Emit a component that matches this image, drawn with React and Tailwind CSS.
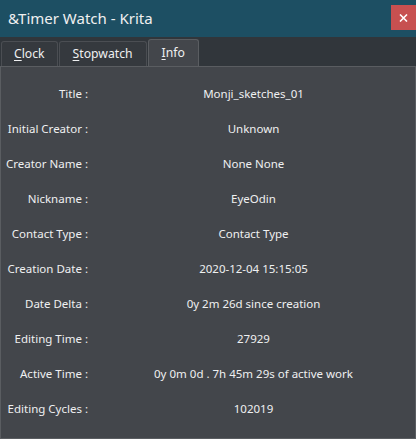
import React from 'react'

const rows = [
  ['Title :', 'Monji_sketches_01'],
  ['Initial Creator :', 'Unknown'],
  ['Creator Name :', 'None None'],
  ['Nickname :', 'EyeOdin'],
  ['Contact Type :', 'Contact Type'],
  ['Creation Date :', '2020-12-04 15:15:05'],
  ['Date Delta :', '0y 2m 26d since creation'],
  ['Editing Time :', '27929'],
  ['Active Time :', '0y 0m 0d . 7h 45m 29s of active work'],
  ['Editing Cycles :', '102019'],
]

const Tab = ({ mnemonic, rest, active, pad }) => (
  <div
    className={
      (active
        ? 'h-[27px] flex items-center border border-b-0 border-[#5a5d61] rounded-t-[3px] bg-[#43464b] text-[#eff0f1] '
        : 'h-[25px] flex items-center border border-b-0 border-[#4b4e53] rounded-t-[3px] bg-[#35393e] text-[#eff0f1] ') + pad
    }
  >
    <span className="underline underline-offset-2">{mnemonic}</span>
    <span>{rest}</span>
  </div>
)

export default function App() {
  return (
    <div
      className="w-[416px] h-[439px] flex flex-col bg-[#31363b] overflow-hidden"
      style={{ fontFamily: '"Noto Sans", "Open Sans", sans-serif' }}
    >
      {/* Title bar */}
      <div className="h-[37px] bg-[#1d4f63] flex items-center justify-between">
        <span className="pl-[8px] text-[15px] text-[#f0f0f0]">&amp;Timer Watch - Krita</span>
        <div className="w-[25px] h-[25px] mb-[2px] bg-[#c75050] flex items-center justify-center">
          <svg width="9" height="8" viewBox="0 0 9 8">
            <path d="M1 0.5 L8 7.5 M8 0.5 L1 7.5" stroke="#ffffff" strokeWidth="1.6" />
          </svg>
        </div>
      </div>

      {/* Tabs */}
      <div className="h-[29px] flex items-end gap-[1px] pl-[1px] text-[12.2px]">
        <Tab mnemonic="C" rest="lock" pad="px-[12px]" />
        <Tab mnemonic="S" rest="topwatch" pad="px-[13px]" />
        <Tab mnemonic="I" rest="nfo" active pad="px-[13px]" />
      </div>

      {/* Info panel */}
      <div className="flex-1 border border-[#5a5d61] bg-[#43464b] pt-[9px] text-[11.5px] text-[#eff0f1]">
        {rows.map(([label, value]) => (
          <div key={label} className="h-[35px] flex items-center">
            <div className="w-[87px] text-right whitespace-nowrap">{label}</div>
            <div className="flex-1 pl-[4px] text-center whitespace-nowrap">{value}</div>
          </div>
        ))}
      </div>
    </div>
  )
}
